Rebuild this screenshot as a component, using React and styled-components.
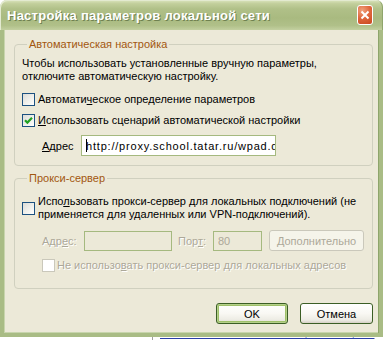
import React from "react";
import styled, { createGlobalStyle } from "styled-components";

const GlobalStyle = createGlobalStyle`
  html, body {
    margin: 0;
    padding: 0;
    background: #ffffff;
  }
  body {
    width: 383px;
    height: 340px;
    overflow: hidden;
    font-family: "Liberation Sans", Arial, sans-serif;
    font-size: 11px;
    color: #000;
  }
`;

const Window = styled.div`
  width: 383px;
  height: 337px;
  display: flex;
  flex-direction: column;
`;

const TitleBar = styled.div`
  flex: none;
  height: 30px;
  display: flex;
  align-items: center;
  justify-content: space-between;
  padding: 0 10px 0 7px;
  box-sizing: border-box;
  border-radius: 7px 7px 0 0;
  background: linear-gradient(
    #dce5bf 0%,
    #c2cf9c 12%,
    #b0c088 30%,
    #a9ba80 60%,
    #b0c089 85%,
    #c3d0a0 100%
  );
  box-shadow: inset 1px 1px 0 #e3ead0, inset -1px 0 0 #8fa56c;
`;

const Title = styled.span`
  color: #ffffff;
  font-weight: bold;
  font-size: 13px;
  letter-spacing: 0.25px;
  text-shadow: 1px 1px 0 #6f8150;
`;

const CloseButton = styled.div`
  width: 16px;
  height: 20px;
  box-sizing: border-box;
  border: 1px solid #ffffff;
  border-radius: 3px;
  background: radial-gradient(circle at 30% 25%, #f0a27e 0%, #e0683e 45%, #c8461e 100%);
  display: flex;
  align-items: center;
  justify-content: center;
`;

const Frame = styled.div`
  flex: 1;
  display: flex;
  flex-direction: column;
  background: #ece9d8;
  border: 4px solid #a9bc85;
  border-top: 0;
  box-shadow: inset 1px 0 0 #c8d5ad, inset -1px 0 0 #8ea56b, inset 0 -1px 0 #c8d5ad,
    -1px 0 0 #8ea56b;
  padding: 8px 6px 0 10px;
`;

const Group = styled.fieldset`
  margin: ${({ $top }) => $top || 0}px 0 0 0;
  padding: ${({ $padTop }) => $padTop}px 7px ${({ $padBottom }) => $padBottom}px 7px;
  border: 1px solid #d0d0bf;
  border-radius: 4px;
  min-width: 0;
  display: flex;
  flex-direction: column;
`;

const Legend = styled.legend`
  color: #a2570f;
  padding: 0 2px;
  margin-left: 5px;
  line-height: 13px;
`;

const Paragraph = styled.div`
  line-height: 13px;
`;

const CheckRow = styled.label`
  display: flex;
  align-items: center;
  margin-top: ${({ $top }) => $top}px;
  margin-left: ${({ $indent }) => $indent || 0}px;
  line-height: 13px;
  color: ${({ $disabled }) => ($disabled ? "#aca899" : "#000")};
  text-shadow: ${({ $disabled }) => ($disabled ? "1px 1px 0 #ffffff" : "none")};
`;

const Box = styled.span`
  flex: none;
  width: 13px;
  height: 13px;
  box-sizing: border-box;
  border: 1px solid ${({ $disabled }) => ($disabled ? "#cac8bb" : "#1c5180")};
  background: ${({ $disabled }) =>
    $disabled ? "#ffffff" : "linear-gradient(135deg, #dcdcd7 0%, #f2f2ee 60%, #ffffff 100%)"};
  margin-right: ${({ $gap }) => $gap}px;
  display: flex;
  align-items: center;
  justify-content: center;
`;

const FieldRow = styled.div`
  display: flex;
  align-items: center;
  margin-top: ${({ $top }) => $top}px;
  margin-left: 20px;
`;

const FieldLabel = styled.span`
  width: ${({ $w }) => $w}px;
  flex: none;
  color: ${({ $disabled }) => ($disabled ? "#aca899" : "#000")};
  text-shadow: ${({ $disabled }) => ($disabled ? "1px 1px 0 #ffffff" : "none")};
`;

const Input = styled.div`
  flex: none;
  width: ${({ $w }) => $w}px;
  height: ${({ $h }) => $h || 21}px;
  box-sizing: border-box;
  border: 1px solid #a5b97f;
  background: ${({ $disabled }) => ($disabled ? "#ece9d8" : "#ffffff")};
  color: ${({ $disabled }) => ($disabled ? "#aca899" : "#000")};
  padding-left: 4px;
  display: flex;
  align-items: center;
  overflow: hidden;
  white-space: nowrap;
  letter-spacing: ${({ $spacing }) => $spacing || 0}px;
  margin-right: ${({ $gap }) => $gap || 0}px;
`;

const Caret = styled.span`
  flex: none;
  width: 1px;
  height: 13px;
  background: #000;
  margin-right: -1px;
`;

const Button = styled.div`
  flex: none;
  width: ${({ $w }) => $w}px;
  height: 21px;
  box-sizing: border-box;
  border-radius: 3px;
  display: flex;
  align-items: center;
  justify-content: center;
  border: 1px solid ${({ $disabled }) => ($disabled ? "#cac8bb" : "#3b5e25")};
  background: ${({ $disabled }) =>
    $disabled ? "#f5f4ea" : "linear-gradient(#ffffff 0%, #f9f8f3 50%, #ecebe3 85%, #d6d0c5 100%)"};
  color: ${({ $disabled }) => ($disabled ? "#aca899" : "#000")};
  box-shadow: ${({ $default }) =>
    $default ? "inset 0 0 0 1px #b5d08a, inset 0 0 0 2px #9fc06a" : "none"};
`;

const ButtonBar = styled.div`
  display: flex;
  justify-content: flex-end;
  gap: 12px;
  margin-top: 14px;
`;

const Below = styled.div`
  height: 3px;
  overflow: hidden;
  padding-left: 152px;
  display: flex;
`;

const BelowText = styled.span`
  border-left: 1px solid #a0a0a0;
  padding-left: 7px;
  margin-top: -10px;
  color: #2a3fa8;
  text-decoration: underline;
  white-space: nowrap;
`;

const Tick = () => (
  <svg width="9" height="9" viewBox="0 0 9 9">
    <path d="M1 4.2 L3.4 6.6 L8 1.8" fill="none" stroke="#21a121" strokeWidth="2.2" />
  </svg>
);

const CloseX = () => (
  <svg width="10" height="10" viewBox="0 0 10 10">
    <path d="M1.5 1.5 L8.5 8.5 M8.5 1.5 L1.5 8.5" stroke="#ffffff" strokeWidth="2" />
  </svg>
);

export default function App() {
  return (
    <>
      <GlobalStyle />
      <Window>
        <TitleBar>
          <Title>Настройка параметров локальной сети</Title>
          <CloseButton>
            <CloseX />
          </CloseButton>
        </TitleBar>
        <Frame>
          <Group $padTop={6} $padBottom={9}>
            <Legend>Автоматическая настройка</Legend>
            <Paragraph>
              Чтобы использовать установленные вручную параметры,
              <br />
              отключите автоматическую настройку.
            </Paragraph>
            <CheckRow $top={10}>
              <Box $gap={3} />
              <span>
                Автомати<u>ч</u>еское определение параметров
              </span>
            </CheckRow>
            <CheckRow $top={8}>
              <Box $gap={3}>
                <Tick />
              </Box>
              <span>
                <u>И</u>спользовать сценарий автоматической настройки
              </span>
            </CheckRow>
            <FieldRow $top={8}>
              <FieldLabel $w={39}>
                <u>А</u>дрес
              </FieldLabel>
              <Input $w={195} $spacing={0.8}>
                <Caret />
                http://proxy.school.tatar.ru/wpad.dat
              </Input>
            </FieldRow>
          </Group>

          <Group $top={6} $padTop={10} $padBottom={16}>
            <Legend>Прокси-сервер</Legend>
            <CheckRow $top={0}>
              <Box $gap={3} />
              <span>
                Испо<u>л</u>ьзовать прокси-сервер для локальных подключений (не
                <br />
                применяется для удаленных или VPN-подключений).
              </span>
            </CheckRow>
            <FieldRow $top={9}>
              <FieldLabel $w={42} $disabled>
                Адр<u>е</u>с:
              </FieldLabel>
              <Input $w={88} $h={20} $gap={6} $disabled />
              <FieldLabel $w={35} $disabled>
                Пор<u>т</u>:
              </FieldLabel>
              <Input $w={49} $h={20} $gap={7} $disabled>
                80
              </Input>
              <Button $w={95} $disabled>
                <span>
                  <u>Д</u>ополнительно
                </span>
              </Button>
            </FieldRow>
            <CheckRow $top={8} $indent={20} $disabled>
              <Box $gap={2} $disabled />
              <span>
                Не использо<u>в</u>ать прокси-сервер для локальных адресов
              </span>
            </CheckRow>
          </Group>

          <ButtonBar>
            <Button $w={72} $default>
              OK
            </Button>
            <Button $w={73}>Отмена</Button>
          </ButtonBar>
        </Frame>
      </Window>
      <Below>
        <BelowText>что не означает отключение, отметив, что</BelowText>
      </Below>
    </>
  );
}
